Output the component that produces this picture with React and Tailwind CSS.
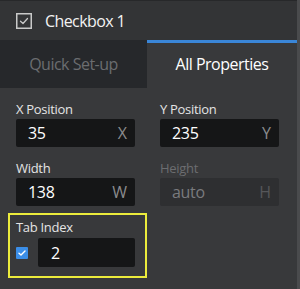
const Field = ({ label, value, unit, disabled }) => (
  <div className="flex flex-col w-[119px]">
    <span className={`text-[13px] leading-[18px] tracking-[-0.3px] ${disabled ? 'text-[#6c6d70]' : 'text-[#e4e4e4]'}`}>{label}</span>
    <div className={`mt-[1px] h-[28px] rounded-[2px] flex items-center justify-between pl-[12px] pr-[8px] ${disabled ? 'bg-[#2e2f31]' : 'bg-[#151617]'}`}>
      <span className={`text-[16px] tracking-[-0.3px] ${disabled ? 'text-[#7a7b7e]' : 'text-white'}`}>{value}</span>
      <span className={`text-[16px] ${disabled ? 'text-[#56575a]' : 'text-[#8a8b8d]'}`}>{unit}</span>
    </div>
  </div>
);

export default function App() {
  return (
    <div className="w-[300px] h-[289px] flex bg-[#38393b] overflow-hidden" style={{ fontFamily: '"Open Sans", "Noto Sans", sans-serif' }}>
      <div className="w-[297px] flex flex-col">
        <div className="h-[40px] bg-[#333436] border-t border-[#27282a] flex items-center pl-[16px] gap-[13px]">
          <svg width="16" height="16" viewBox="0 0 16 16" fill="none">
            <rect x="0.75" y="0.75" width="14.5" height="14.5" stroke="#c9c9c9" strokeWidth="1.5" />
            <path d="M4.5 8.2 L7 10.5 L11.5 5.5" stroke="#c9c9c9" strokeWidth="1.3" strokeLinecap="round" strokeLinejoin="round" />
          </svg>
          <span className="text-[16px] tracking-[-0.6px] text-[#f2f2f2]">Checkbox 1</span>
        </div>
        <div className="h-[48px] flex">
          <div className="w-[147px] bg-[#26282b] flex items-center justify-center text-[16px] tracking-[-0.5px] text-[#6b6d70]">Quick Set-up</div>
          <div className="flex-1 border-t-[3px] border-[#3a86d8] flex items-center justify-center text-[16px] tracking-[-0.5px] text-white pb-[3px]">All Properties</div>
        </div>
        <div className="flex flex-col pt-[12px] pl-[16px]">
          <div className="flex gap-[25px]">
            <Field label="X Position" value="35" unit="X" />
            <Field label="Y Position" value="235" unit="Y" />
          </div>
          <div className="flex gap-[25px] mt-[12px]">
            <Field label="Width" value="138" unit="W" />
            <Field label="Height" value="auto" unit="H" disabled />
          </div>
          <div className="-ml-[8px] mt-[7px] w-[139px] h-[65px] border-2 border-[#ecec3c] pt-[3px] pl-[6px] flex flex-col">
            <span className="text-[13px] leading-[18px] tracking-[-0.3px] text-[#e4e4e4]">Tab Index</span>
            <div className="mt-[2px] flex items-center gap-[10px]">
              <div className="w-[12px] h-[12px] bg-[#3b8ee8] rounded-[1px] flex items-center justify-center">
                <svg width="10" height="10" viewBox="0 0 10 10" fill="none">
                  <path d="M2 5.2 L4 7 L8 3" stroke="white" strokeWidth="1.4" strokeLinecap="round" strokeLinejoin="round" />
                </svg>
              </div>
              <div className="w-[97px] h-[29px] bg-[#151617] rounded-[2px] flex items-center pl-[13px]">
                <span className="text-[16px] text-white">2</span>
              </div>
            </div>
          </div>
        </div>
      </div>
      <div className="w-[3px] bg-[#4a4b4d]" />
    </div>
  );
}
